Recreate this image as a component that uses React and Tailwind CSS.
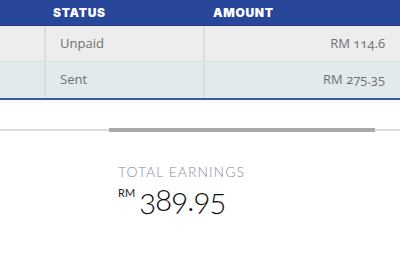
// Earnings table with horizontal scroll indicator and a total
import React from 'react';

const rows = [
  { status: 'Unpaid', amount: '114.6', bg: 'bg-[#ededed]' },
  { status: 'Sent', amount: '275.35', bg: 'bg-[#e2eaec]' },
];

const App = () => {
  return (
    <div className="w-[400px] h-[259px] bg-white overflow-hidden font-['Open_Sans',sans-serif]">
      {/* Table */}
      <div className="w-full">
        {/* Header */}
        <div className="flex h-[26px] bg-[#28479a] border-b border-[#1f3a80] text-white">
          <div className="w-[46px]" />
          <div className="w-[159px] pl-[7px] flex items-center font-['Inter',sans-serif] font-black text-[12px] tracking-[0.06em]">
            STATUS
          </div>
          <div className="flex-1 pl-[8px] flex items-center font-['Inter',sans-serif] font-black text-[12px] tracking-[0.06em]">
            AMOUNT
          </div>
        </div>

        {/* Rows */}
        {rows.map((r, i) => (
          <div
            key={r.status}
            className={`flex h-[36px] ${r.bg} ${i === 0 ? 'border-b border-[#d8e2e4]' : ''}`}
          >
            <div className="w-[46px] border-r-2 border-[#d3dfe2]" />
            <div className="w-[159px] pl-[14px] flex items-center text-[13px] text-[#707070] border-r-2 border-[#d3dfe2]">
              {r.status}
            </div>
            <div className="flex-1 pr-[15px] flex items-center justify-end text-[13px] text-[#707070] [font-variant-numeric:oldstyle-nums]">
              RM {r.amount}
            </div>
          </div>
        ))}
        <div className="h-[2px] bg-[#3b5ba9]" />
      </div>

      {/* Scroll indicator */}
      <div className="relative mt-[28px] h-[4px]">
        <div className="absolute left-0 right-0 top-[1px] h-[2px] bg-[#dcdcdc]" />
        <div className="absolute left-[109px] w-[266px] top-0 h-[4px] bg-[#a9a9a9]" />
      </div>

      {/* Total */}
      <div className="pl-[118px] pt-[32px]">
        <div className="font-['Lato',sans-serif] font-light text-[14px] leading-[16px] tracking-[0.07em] text-[#8b8b99]">
          TOTAL EARNINGS
        </div>
        <div className="flex items-start mt-[1px]">
          <span className="font-['Lato',sans-serif] text-[11px] leading-[14px] text-[#222] mt-[5px]">RM</span>
          <span className="font-['Lato',sans-serif] font-light text-[32px] leading-[36px] tracking-[-0.04em] text-[#111] [font-variant-numeric:oldstyle-nums] ml-[4px]">
            389.95
          </span>
        </div>
      </div>
    </div>
  );
};

export default App;
